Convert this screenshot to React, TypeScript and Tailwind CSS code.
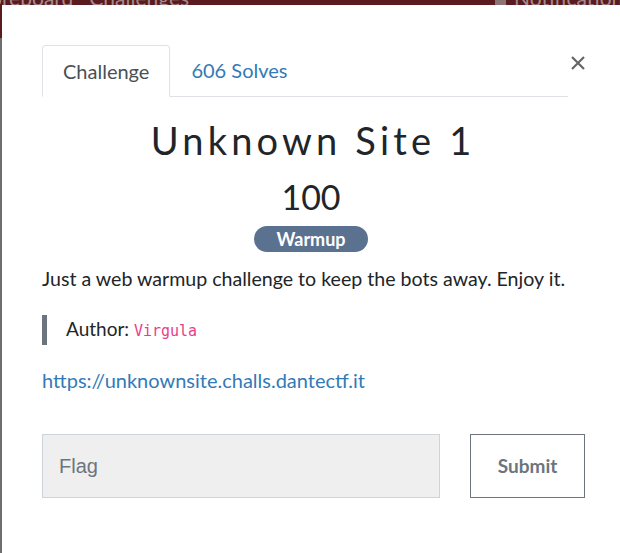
export default function App() {
  return (
    <div className="relative h-[553px] w-[620px] overflow-hidden bg-[#6e6e6e] font-['Lato',sans-serif]">
      {/* dimmed navbar behind the modal */}
      <div className="flex h-[38px] items-start whitespace-nowrap bg-[#5a1a1e] text-[21px] leading-none text-[#a48a8c]">
        <span className="-ml-[10px] -mt-[13px]">oreboard</span>
        <span className="ml-[16px] -mt-[13px]">Challenges</span>
        <span className="ml-auto -mt-[13px] flex w-[125px] shrink-0 items-start gap-[8px]">
          <span className="mt-[8px] h-[12px] w-[11px] shrink-0 rounded-[2px] bg-[#8a7476]" />
          Notifications
        </span>
      </div>

      {/* modal */}
      <div className="absolute left-[2px] top-[5px] h-[548px] w-[618px] bg-white">
        <div className="flex items-start pl-[40px] pr-[34px] pt-[40px]">
          <div className="flex flex-1 border-b border-[#dee2e6]">
            <div className="-mb-px rounded-t-[4px] border border-b-white border-[#dee2e6] px-[20px] py-[13px] text-[20px] leading-[24px] text-[#495057]">
              Challenge
            </div>
            <div className="px-[21px] py-[13px] text-[20px] leading-[24px] text-[#337ab7]">606 Solves</div>
          </div>
          <button className="ml-[2px] mt-[10px] w-[16px] text-[#666]">
            <svg viewBox="0 0 16 16" width="16" height="16">
              <path d="M2 2 L14 14 M14 2 L2 14" stroke="currentColor" strokeWidth="2.2" />
            </svg>
          </button>
        </div>

        <div className="flex flex-col items-center">
          <h1 className="mt-[20px] pl-[0.11em] text-[38px] leading-[46px] tracking-[0.11em] text-[#212529]">
            Unknown Site 1
          </h1>
          <h2 className="mt-[14px] text-[34px] leading-[40px] text-[#212529]">100</h2>
          <span className="mt-[9px] rounded-full bg-[#5b7190] px-[22px] text-[18px] font-bold leading-[26px] text-white">
            Warmup
          </span>
        </div>

        <div className="px-[40px]">
          <p className="mt-[12px] text-[19.6px] leading-[30px] text-[#212529]">
            Just a web warmup challenge to keep the bots away. Enjoy it.
          </p>
          <blockquote className="mt-[21px] border-l-[5px] border-[#6c757d] pl-[19px] text-[19px] leading-[28px] text-[#212529]">
            Author: <code className="font-['DejaVu_Sans_Mono',monospace] text-[15px] text-[#e83e8c]">Virgula</code>
          </blockquote>
          <a className="mt-[21px] block text-[20px] leading-[28px] text-[#337ab7]">
            https://unknownsite.challs.dantectf.it
          </a>

          <div className="mt-[40px] flex">
            <input
              placeholder="Flag"
              className="h-[64px] w-[398px] shrink-0 border border-[#ced4da] bg-[#efefef] px-[16px] font-['Liberation_Sans',sans-serif] text-[20px] text-[#495057] placeholder:text-[#6c757d]"
            />
            <button className="ml-[30px] h-[64px] w-[115px] shrink-0 border border-[#6c757d] bg-white text-[19px] font-bold text-[#6c757d]">
              Submit
            </button>
          </div>
        </div>
      </div>
    </div>
  );
}
